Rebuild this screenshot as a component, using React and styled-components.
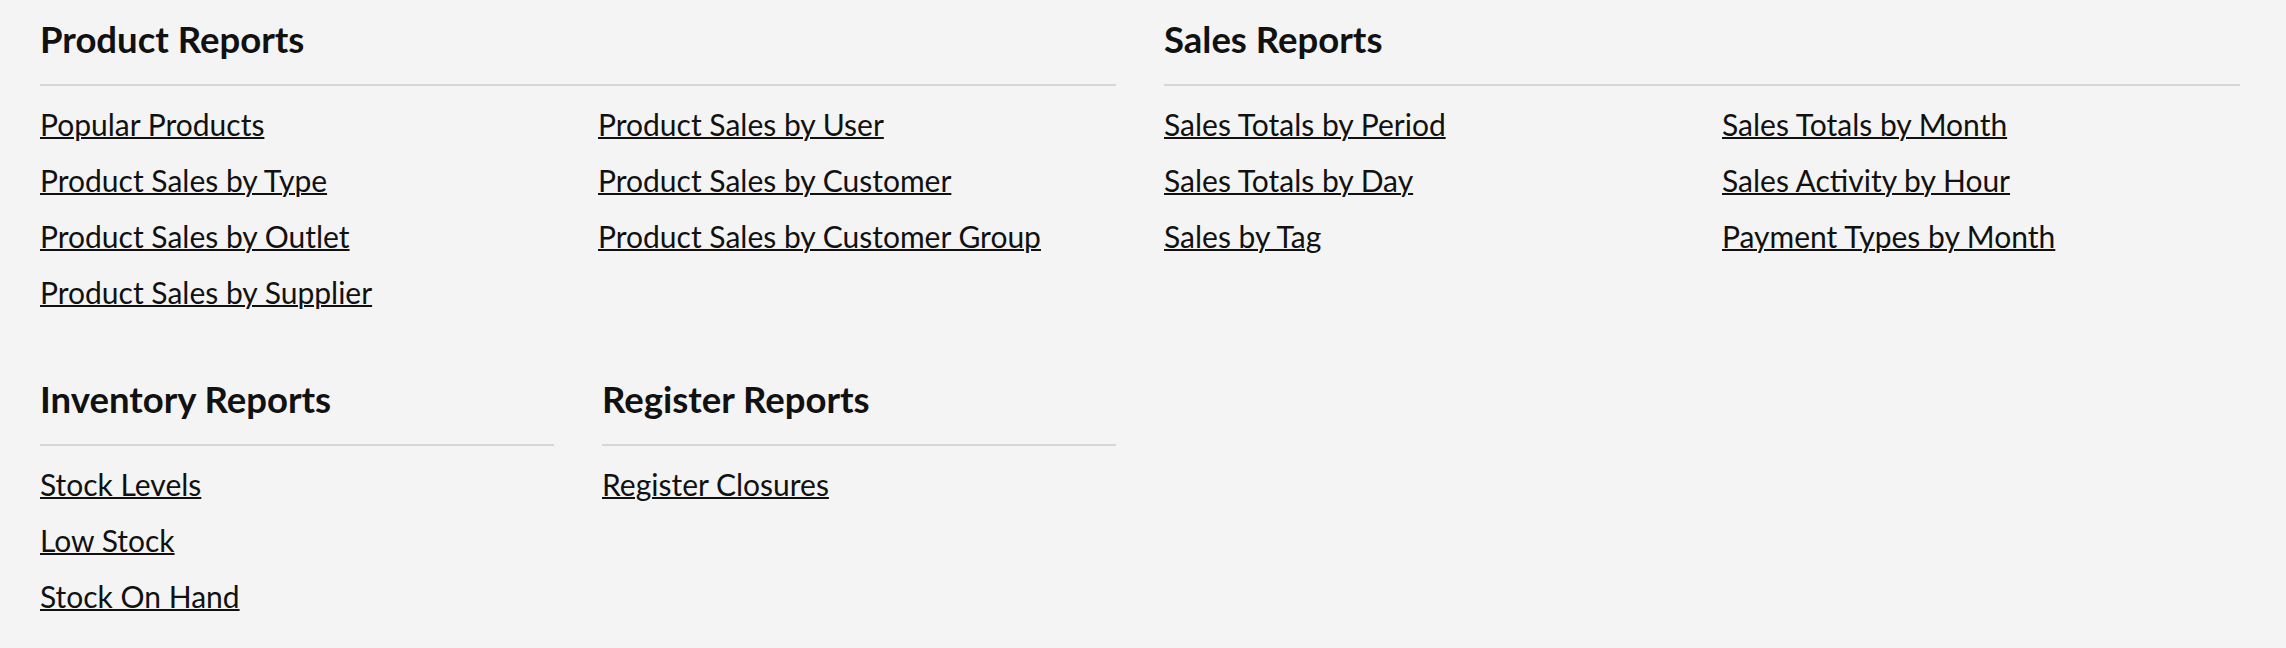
import React from "react";
import styled, { createGlobalStyle } from "styled-components";

const GlobalStyle = createGlobalStyle`
  html, body {
    margin: 0;
    padding: 0;
    background: #f4f4f4;
  }
  body {
    font-family: Lato, "Liberation Sans", Arial, sans-serif;
    color: #111;
  }
`;

const sections = [
  {
    title: "Product Reports",
    span: 2,
    columns: 2,
    links: [
      "Popular Products",
      "Product Sales by Type",
      "Product Sales by Outlet",
      "Product Sales by Supplier",
      "Product Sales by User",
      "Product Sales by Customer",
      "Product Sales by Customer Group",
    ],
  },
  {
    title: "Sales Reports",
    span: 2,
    columns: 2,
    links: [
      "Sales Totals by Period",
      "Sales Totals by Day",
      "Sales by Tag",
      "Sales Totals by Month",
      "Sales Activity by Hour",
      "Payment Types by Month",
    ],
  },
  {
    title: "Inventory Reports",
    span: 1,
    columns: 1,
    links: ["Stock Levels", "Low Stock", "Stock On Hand"],
  },
  {
    title: "Register Reports",
    span: 1,
    columns: 1,
    links: ["Register Closures"],
  },
];

function App() {
  return (
    <>
      <GlobalStyle />
      <ReportsGrid>
        {sections.map((section) => (
          <Section key={section.title} $span={section.span}>
            <SectionTitle>{section.title}</SectionTitle>
            <LinkList $columns={section.columns}>
              {section.links.map((label) => (
                <li key={label}>
                  <ReportLink href="#">{label}</ReportLink>
                </li>
              ))}
            </LinkList>
          </Section>
        ))}
      </ReportsGrid>
    </>
  );
}

export default App;

const ReportsGrid = styled.div`
  display: grid;
  grid-template-columns: repeat(4, 1fr);
  column-gap: 48px;
  row-gap: 58px;
  align-items: start;
  padding: 18px 46px 0 40px;
`;

const Section = styled.section`
  grid-column: span ${(p) => p.$span};
  min-width: 0;
`;

const SectionTitle = styled.h2`
  margin: 0;
  padding-bottom: 24px;
  border-bottom: 2px solid #d6d6d6;
  font-size: 36.5px;
  line-height: 42px;
  font-weight: 700;
  color: #111;
`;

const LinkList = styled.ul`
  list-style: none;
  margin: 0;
  padding: 10px 0 0;
  column-count: ${(p) => p.$columns};
  column-gap: 40px;

  > li {
    break-inside: avoid;
  }
`;

const ReportLink = styled.a`
  display: inline-block;
  font-size: 30px;
  line-height: 56px;
  color: #111;
  text-decoration: underline;
  text-decoration-thickness: 2px;
  text-underline-offset: 1px;
`;
